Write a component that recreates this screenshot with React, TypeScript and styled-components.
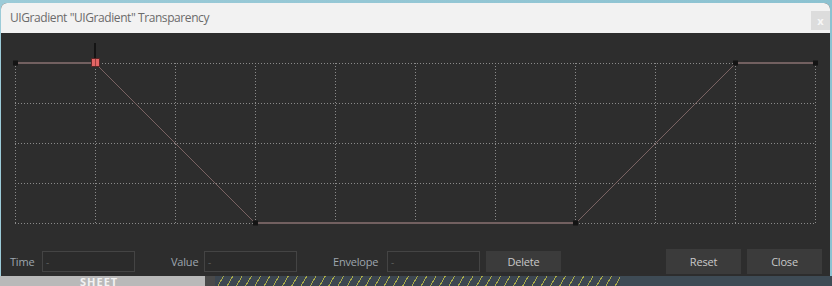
import React from "react";
import styled, { createGlobalStyle } from "styled-components";

const Global = createGlobalStyle`
  html, body { margin: 0; padding: 0; }
  body {
    width: 832px; height: 286px; overflow: hidden;
    font-family: "Open Sans", "Liberation Sans", sans-serif;
  }
`;

const Page = styled.div`
  width: 832px;
  height: 286px;
  box-sizing: border-box;
  padding-top: 3px;
  display: flex;
  flex-direction: column;
  background: linear-gradient(90deg, #9ccbd8, #8cc2d1);
`;

const Window = styled.div`
  margin-left: 1px;
  width: 829px;
  height: 278px;
  display: flex;
  flex-direction: column;
  border-radius: 6px 6px 0 0;
  overflow: hidden;
  background: #2d2d2d;
`;

const TitleBar = styled.div`
  height: 30px;
  flex: none;
  display: flex;
  align-items: center;
  padding-left: 9px;
  background: #f2f2f2;
`;

const Title = styled.span`
  flex: 1;
  font-size: 12px;
  letter-spacing: -0.42px;
  color: #6b6b6b;
  padding-bottom: 1px;
`;

const CloseBox = styled.div`
  align-self: flex-start;
  margin-top: 8px;
  width: 19px;
  height: 19px;
  display: flex;
  align-items: center;
  justify-content: center;
  background: #dcdcdc;
  color: #f7f7f7;
  font-size: 11px;
  font-weight: 700;
  line-height: 1;
`;

const Body = styled.div`
  flex: 1;
  display: flex;
  flex-direction: column;
`;

const Graph = styled.svg`
  display: block;
  flex: none;
`;

const Controls = styled.div`
  margin-top: 16px;
  height: 25px;
  display: flex;
  align-items: center;
  padding: 0 8px 0 9px;
`;

const Field = styled.div<{ $gap?: number }>`
  display: flex;
  align-items: center;
  margin-right: ${(p) => p.$gap ?? 36}px;
`;

const Label = styled.span<{ $w: number }>`
  width: ${(p) => p.$w}px;
  font-size: 11px;
  letter-spacing: -0.2px;
  color: #9ea6ad;
  padding-bottom: 1px;
`;

const Input = styled.div`
  width: 93px;
  height: 21px;
  box-sizing: border-box;
  border: 1px solid #444444;
  background: #2b2b2b;
  color: #5c5c5c;
  font-size: 10px;
  display: flex;
  align-items: center;
  padding-left: 3px;
`;

const Button = styled.div<{ $h?: number }>`
  width: 75px;
  height: ${(p) => p.$h ?? 25}px;
  display: flex;
  align-items: center;
  justify-content: center;
  background: #3b3b3b;
  color: #c9c9c9;
  font-size: 11px;
  letter-spacing: -0.2px;
  padding-bottom: 1px;
  box-sizing: border-box;
`;

const Spacer = styled.div`
  flex: 1;
`;

const ButtonGroup = styled.div`
  display: flex;
  gap: 6px;
`;

const Strip = styled.div`
  flex: 1;
  display: flex;
`;

const StripPart = styled.div<{ $w?: number; $bg: string }>`
  ${(p) => (p.$w ? `width: ${p.$w}px; flex: none;` : "flex: 1;")}
  background: ${(p) => p.$bg};
  overflow: hidden;
`;

const StripText = styled.span`
  display: block;
  margin: 1px 0 0 80px;
  font-size: 11px;
  font-weight: 700;
  line-height: 9px;
  color: #f2f2f2;
  letter-spacing: 1px;
`;

const cols = Array.from({ length: 11 }, (_, i) => 15 + 80 * i);
const rows = [63, 103, 143, 183, 223];
const pts: [number, number][] = [
  [15, 63],
  [95, 63],
  [255, 223],
  [575, 223],
  [735, 63],
  [815, 63],
];

const GRID = "#8a8a8a";
const CURVE = "#726060";
const SLOPE = "#7a6363";

function CurveGraph() {
  return (
    <Graph width={829} height={200} viewBox="1 33 829 200">
      {cols.map((x) => (
        <line
          key={"c" + x}
          x1={x + 0.5}
          y1={63}
          x2={x + 0.5}
          y2={224}
          stroke={GRID}
          strokeWidth={1}
          strokeDasharray="1 2"
        />
      ))}
      {rows.map((y) => (
        <line
          key={"r" + y}
          x1={15}
          y1={y + 0.5}
          x2={816}
          y2={y + 0.5}
          stroke={GRID}
          strokeWidth={1}
          strokeDasharray="1 2"
        />
      ))}
      {pts.slice(0, -1).map(([x, y], i) => {
        const [x2, y2] = pts[i + 1];
        const flat = y === y2;
        return (
          <line
            key={"s" + i}
            x1={x + 0.5}
            y1={flat ? y : y + 0.5}
            x2={x2 + 0.5}
            y2={flat ? y2 : y2 + 0.5}
            stroke={flat ? CURVE : SLOPE}
            strokeWidth={flat ? 2 : 1}
          />
        );
      })}
      {pts
        .filter((_, i) => i !== 1)
        .map(([x, y]) => (
          <rect key={"m" + x} x={x - 2} y={y - 2.5} width={5} height={5} fill="#141414" />
        ))}
      <rect x={94} y={43} width={2} height={16} fill="#141414" />
      <rect x={91} y={58} width={9} height={9} fill="#5a2626" />
      <rect x={92} y={59} width={7} height={7} fill="#e46565" />
      <rect x={95} y={59} width={1} height={7} fill="#9a3c3c" />
    </Graph>
  );
}

export default function App() {
  return (
    <>
      <Global />
      <Page>
        <Window>
          <TitleBar>
            <Title>UIGradient "UIGradient" Transparency</Title>
            <CloseBox>x</CloseBox>
          </TitleBar>
          <Body>
            <CurveGraph />
            <Controls>
              <Field>
                <Label $w={32}>Time</Label>
                <Input>-</Input>
              </Field>
              <Field>
                <Label $w={33}>Value</Label>
                <Input>-</Input>
              </Field>
              <Field $gap={6}>
                <Label $w={54}>Envelope</Label>
                <Input>-</Input>
              </Field>
              <Button $h={21}>Delete</Button>
              <Spacer />
              <ButtonGroup>
                <Button>Reset</Button>
                <Button>Close</Button>
              </ButtonGroup>
            </Controls>
          </Body>
        </Window>
        <Strip>
          <StripPart $w={205} $bg="#b9b9b9">
            <StripText>SHEET</StripText>
          </StripPart>
          <StripPart $w={10} $bg="#4a4a4a" />
          <StripPart $w={405} $bg="repeating-linear-gradient(120deg, #3c4650 0 7px, #a9aa48 7px 8px)" />
          <StripPart $bg="#3e4b55" />
        </Strip>
      </Page>
    </>
  );
}
